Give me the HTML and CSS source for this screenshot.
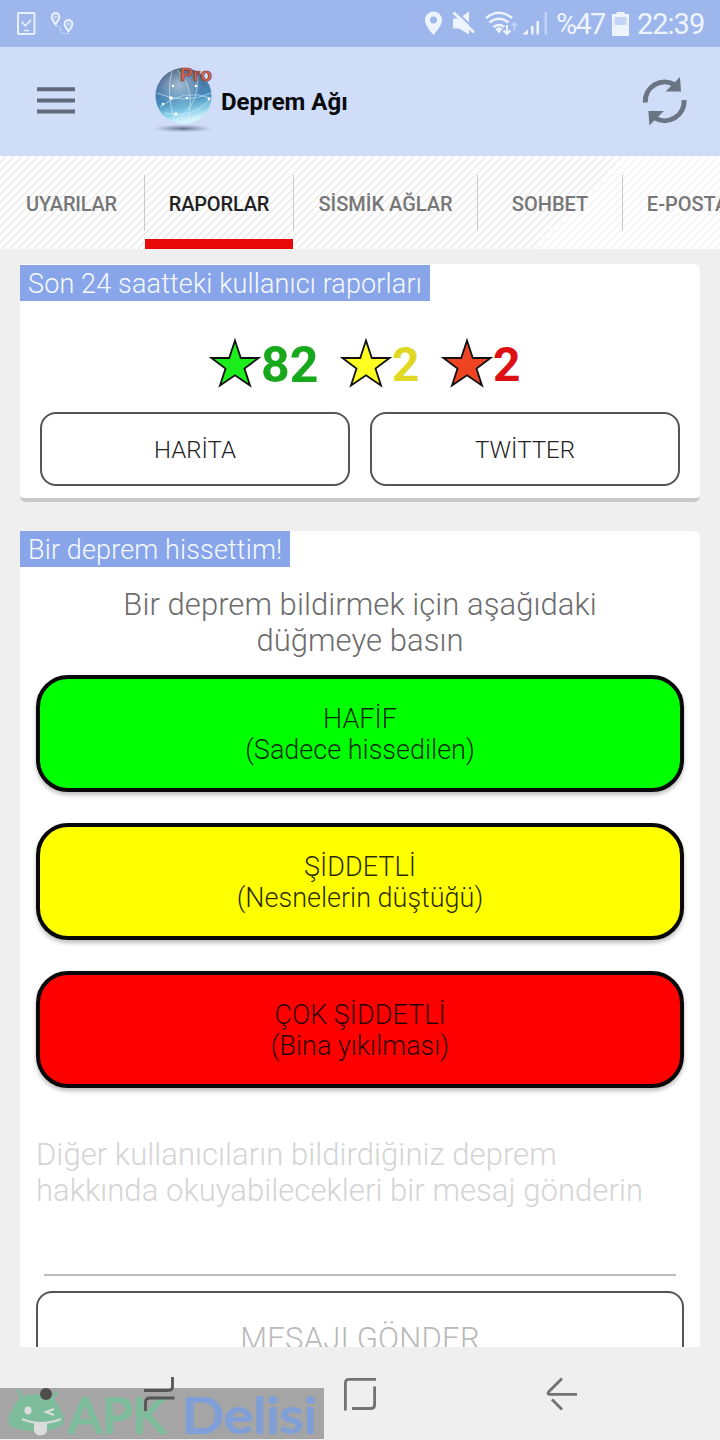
FILE: index.html
```html
<!DOCTYPE html>
<html lang="tr">
<head>
<meta charset="utf-8">
<title>Deprem Ağı</title>
<link rel="stylesheet" href="styles.css">
</head>
<body>
<div class="phone">
  <div class="status">
    <svg class="status-left" width="62" height="26" viewBox="0 0 62 26" fill="none" stroke="#e6effc">
      <rect x="3" y="2" width="16.500" height="21" rx="1" stroke-width="2"/>
      <path d="M6.500 10.500l3.700 4.300 6-6M9 19.500h5" stroke-width="1.700"/>
      <path d="M40.500 13c-2.300-3-3.800-4.500-3.800-7a3.800 3.800 0 0 1 7.600 0c0 2.500-1.500 4-3.800 7zM53.500 20c-2.300-3-3.800-4.500-3.800-7a3.800 3.800 0 0 1 7.600 0c0 2.500-1.500 4-3.800 7z" stroke-width="2.200"/>
      <circle cx="40.500" cy="6" r="1"/><circle cx="53.500" cy="13" r="1"/>
      <path d="M40.500 15q5 0 5 4t8 3.500v-3" stroke-dasharray="2 1"/>
    </svg>
    <div class="status-right">
      <svg width="124" height="28" viewBox="0 0 124 28" fill="#edf4fd">
        <path fill-rule="evenodd" d="M9.500 1.500a8.500 8.500 0 0 1 8.500 8.500c0 6-8.500 15-8.500 15S1 16 1 10a8.500 8.500 0 0 1 8.500-8.500zm0 5a3.500 3.500 0 1 0 0 7 3.500 3.500 0 0 0 0-7z"/>
        <path d="M29 8.500h6l10-7v23L35 18.500h-6z"/>
        <path d="M31 .500l20 19" stroke="#9db6ec" stroke-width="2"/>
        <path d="M29.500 2.500l20.500 20" stroke="#edf4fd" stroke-width="2.800"/>
        <g fill="none" stroke="#edf4fd" stroke-width="2.600"><path d="M62 8q13-10.500 26 0"/><path d="M65.500 12.500q9.500-7.500 19 0"/><path d="M69.500 17q5.500-4 11 0"/></g>
        <path d="M71.500 19q4-3.500 7 0L75 23.500z"/>
        <path d="M83 15v9m-3.500-3.500l3.500 3.500 3.500-3.500" stroke="#edf4fd" fill="none" stroke-width="2"/>
        <path d="M90.500 21v-8m-3 3l3-3 3 3" stroke="#c3d5f6" fill="none" stroke-width="1.600"/>
        <path d="M98 24.500h6v-5zM107 16h2.500v8.500H107zM112.500 11h2.500v13.500h-2.500z"/>
        <path fill="#c0d2f6" d="M120.500 2h2.500v22.500h-2.500z"/>
      </svg>
      <span class="pct">%47</span>
      <svg width="17" height="24" viewBox="0 0 17 24"><path fill="#edf4fd" d="M4.500 0h8v2H17v22H0V2h4.500z"/><path fill="#c4d4f5" d="M2.500 5h12v8h-12z"/></svg>
      <span class="clock">22:39</span>
    </div>
  </div>
  <header class="bar">
    <svg class="menu" width="38" height="27" viewBox="0 0 38 27"><path d="M0 2.200h38M0 13.500h38M0 24.500h38" stroke="#62697b" stroke-width="4"/></svg>
    <svg class="logo" width="64" height="70" viewBox="0 0 64 70">
      <defs>
        <linearGradient id="globe" x1="0" y1="0" x2="0.200" y2="1"><stop offset="0" stop-color="#2c3f58"/><stop offset=".3" stop-color="#4a709b"/><stop offset=".62" stop-color="#458abb"/><stop offset=".85" stop-color="#86cee8"/><stop offset="1" stop-color="#d5f3fb"/></linearGradient>
        <radialGradient id="shine" cx=".42" cy=".3" r=".42"><stop offset="0" stop-color="#fff" stop-opacity=".5"/><stop offset="1" stop-color="#fff" stop-opacity="0"/></radialGradient>
        <radialGradient id="shade"><stop offset="0" stop-color="#48546c" stop-opacity=".8"/><stop offset="1" stop-color="#7584a5" stop-opacity="0"/></radialGradient>
      </defs>
      <ellipse cx="30" cy="63.500" rx="30" ry="4" fill="url(#shade)"/>
      <circle cx="30.500" cy="31" r="28" fill="url(#globe)"/>
      <circle cx="30.500" cy="31" r="28" fill="url(#shine)"/>
      <g fill="none" stroke="#d9effb" stroke-width=".9" opacity=".65"><path d="M4 28q27 12 54 0M7 42q24-19 50-9M19 6q-6 20 2 48M24 5q20 20 10 52M44 11q3 28-20 43M12 48q25 7 44-12"/></g>
      <g fill="#fff"><circle cx="18" cy="33" r="1.800"/><circle cx="34" cy="33" r="1.300"/><circle cx="56" cy="34" r="1.400"/><circle cx="10" cy="39" r="1.300"/><circle cx="23" cy="49" r="1.700"/><circle cx="20" cy="21" r="1.200"/><circle cx="43" cy="21" r="1.300"/></g>
      <text x="27" y="16" class="pro" textLength="32" lengthAdjust="spacingAndGlyphs">Pro</text>
    </svg>
    <h1 class="title">Deprem Ağı</h1>
    <svg class="refresh" width="46" height="50" viewBox="0 0 46 50"><g fill="none" stroke="#6b7482" stroke-width="5"><path d="M4.300 25.500A19.400 19.400 0 0 1 34 7.900"/><path d="M43.100 23.100A19.400 19.400 0 0 1 13.400 40.700"/></g><path fill="#6b7482" d="M39 0l1 14.500H24.500zM8.400 48.600L7.400 34.100h15.500z"/></svg>
  </header>
  <nav class="tabs">
    <div class="tab t1"><span>UYARILAR</span></div>
    <div class="tab t2 active"><span>RAPORLAR</span></div>
    <div class="tab t3"><span>SİSMİK AĞLAR</span></div>
    <div class="tab t4"><span>SOHBET</span></div>
    <div class="tab t5"><span>E-POSTA</span></div>
  </nav>
  <main class="content">
    <section class="card">
      <h2 class="label l1">Son 24 saatteki kullanıcı raporları</h2>
      <div class="counts">
        <svg class="star" width="52" height="50" viewBox="0 0 52 50"><path d="M26 2.500l5.800 17.500H49.500L35.500 30.500l5.500 17L26 37.300 11 47.500l5.500-17L2.500 20h17.700z" fill="#1cee1c" stroke="#111" stroke-width="1.800"/></svg><b class="n green">82</b>
        <svg class="star s2" width="52" height="50" viewBox="0 0 52 50"><path d="M26 2.500l5.800 17.500H49.500L35.500 30.500l5.500 17L26 37.300 11 47.500l5.500-17L2.500 20h17.700z" fill="#ff2" stroke="#111" stroke-width="1.800"/></svg><b class="n yellow">2</b>
        <svg class="star s3" width="52" height="50" viewBox="0 0 52 50"><path d="M26 2.500l5.800 17.500H49.500L35.500 30.500l5.500 17L26 37.300 11 47.500l5.500-17L2.500 20h17.700z" fill="#ef4423" stroke="#111" stroke-width="1.800"/></svg><b class="n red">2</b>
      </div>
      <div class="pair"><button class="outline">HARİTA</button><button class="outline">TWİTTER</button></div>
    </section>
    <section class="card report">
      <h2 class="label l2">Bir deprem hissettim!</h2>
      <p class="lead">Bir deprem bildirmek için aşağıdaki<br>düğmeye basın</p>
      <button class="big mild">HAFİF<br>(Sadece hissedilen)</button>
      <button class="big strong">ŞİDDETLİ<br>(Nesnelerin düştüğü)</button>
      <button class="big severe">ÇOK ŞİDDETLİ<br>(Bina yıkılması)</button>
      <div class="field">Diğer kullanıcıların bildirdiğiniz deprem<br>hakkında okuyabilecekleri bir mesaj gönderin</div>
      <div class="rule"></div>
      <button class="send">MESAJI GÖNDER</button>
    </section>
  </main>
  <footer class="sysnav">
    <div class="watermark">
      <svg width="324" height="51" viewBox="0 0 324 51">
        <g fill="#7dbd9c"><path d="M17 13L22 9Q36 3 51 9L56 13Q61 22 64 31Q64 40 49 42L36 44L19 41Q7 39 8 31Q11 22 17 13z"/><path d="M19 3l5 10M57 4l-6 9" stroke="#7dbd9c" stroke-width="3" stroke-linecap="round"/></g>
        <ellipse cx="28" cy="22.500" rx="3.500" ry="4" fill="#dcdcdc"/>
        <path d="M54 21l-8 3 8 3M22 31q19 8 39 0" fill="none" stroke="#dcdcdc" stroke-width="2"/>
        <path d="M34 34.500h13v6q0 7-6.500 7T34 40.500z" fill="#dcdcdc"/>
        <text class="wm green-mark" x="68" y="45" textLength="98" lengthAdjust="spacingAndGlyphs">APK</text>
        <text class="wm blue-mark" x="182" y="45" textLength="135" lengthAdjust="spacingAndGlyphs">Delisi</text>
      </svg>
    </div>
    <svg class="dot" width="12" height="12" viewBox="0 0 12 12"><circle cx="6" cy="6" r="6" fill="#4d4d4d"/></svg>
    <svg class="recent" width="32" height="36" viewBox="0 0 32 36" fill="none" stroke="#555" stroke-width="2.800"><path d="M0 13.500h24q4.500 0 4.500-4V0M30.500 21H6q-4.500 0-4.500 4v9"/></svg>
    <svg class="home" width="32" height="33" viewBox="0 0 32 33" fill="none" stroke="#737373" stroke-width="2.800"><path d="M1.400 32.500V5q0-3.600 3.600-3.600h27M30.600 8.500V27q0 3.500-3.600 3.500H8"/></svg>
    <svg class="back" width="32" height="34" viewBox="0 0 32 34" fill="none" stroke="#737373" stroke-width="2.800"><path d="M16 1.500L2.500 15q-1.500 2.300 1 2.300H31M6 22.500l10 10"/></svg>
  </footer>
</div>
</body>
</html>
```
FILE: styles.css
```css
* { box-sizing: border-box; }
body { margin: 0; font-family: Roboto, "Liberation Sans", sans-serif; }
.phone { width: 720px; height: 1440px; display: flex; flex-direction: column; background: #efefef; overflow: hidden; }
h1, h2, p { margin: 0; }
button { font-family: inherit; padding: 0; display: block; }
svg { display: block; flex: none; }

.status { height: 47px; flex: none; background: #9db6ec; display: flex; justify-content: space-between; align-items: flex-start; padding: 11px 16px 0 15px; }
.status-right { display: flex; align-items: center; color: #edf4fd; font-size: 29px; height: 26px; line-height: 26px; }
.pct { width: 47px; margin: 0 9px 0 8px; letter-spacing: -1.800px; }
.clock { width: 67px; margin-left: 8px; letter-spacing: -1px; }

.bar { height: 109px; flex: none; background: #cfddf8; display: flex; align-items: flex-start; padding: 0 33px 0 37px; }
.menu { margin-top: 40px; }
.logo { margin: 18px 0 0 78px; }
.pro { font: bold 18px "Liberation Sans", sans-serif; fill: #d96a55; stroke: #752c25; stroke-width: .6px; }
.title { margin: 40px auto 0 4px; font-size: 24px; font-weight: 700; line-height: 30px; color: #090a0e; white-space: nowrap; }
.refresh { margin-top: 30px; }

.tabs { height: 93px; flex: none; display: flex; overflow: hidden; background: repeating-linear-gradient(135deg, #fefefe 0 4px, #ebebeb 4px 5px, #fefefe 5px 5.660px); }
.tab { flex: none; display: flex; flex-direction: column; align-items: center; justify-content: center; font-size: 20px; font-weight: 500; color: #777; white-space: nowrap; padding: 2px 1px 0 0; background: linear-gradient(#c9c9c9, #c9c9c9) right 19px / 1px 56px no-repeat; }
.t1 { width: 145px; letter-spacing: -.2px; padding-right: 2px; }
.t2 { width: 149px; letter-spacing: -.15px; }
.t3 { width: 184px; }
.t4 { width: 145px; }
.t5 { width: 129px; padding-right: 0; }
.active { color: #222; background: linear-gradient(#c9c9c9, #c9c9c9) right 19px / 1px 56px no-repeat, linear-gradient(#e90909, #e90909) 0 100% / 148px 10px no-repeat; }

.content { height: 1098px; flex: none; overflow: hidden; padding: 15px 20px 0; }
.card { height: 238px; background: #fff; border-radius: 0 6px 6px 6px; border-bottom: 4px solid #c8c8c8; display: flex; flex-direction: column; margin-bottom: 29px; }
.report { height: 900px; padding: 0 16px; }
.label { align-self: flex-start; height: 36px; flex: none; margin-top: 1px; line-height: 38px; padding-left: 8px; background: #88a5e9; color: #f6faff; font-size: 27px; letter-spacing: .14px; font-weight: 300; white-space: nowrap; }
.l1 { width: 410px; }
.l2 { width: 270px; margin-left: -16px; margin-top: 0; }
.counts { height: 50px; margin: 37px 0 24px 189px; display: flex; align-items: center; }
.n { font: 700 48px/52px Roboto, sans-serif; padding-top: 3px; }
.green { color: #18a81c; width: 57px; font-size: 50px; }
.yellow { color: #e0d823; width: 27px; }
.red { color: #dd1014; width: 27px; }
.s2 { margin-left: 22px; }
.s3 { margin-left: 22px; }
.pair { display: flex; gap: 20px; padding: 0 20px; }
.outline { width: 310px; height: 74px; border: 2px solid #555; border-radius: 16px; background: #fff; font-size: 24px; font-weight: 300; color: #222; padding-top: 1px; }
.lead { text-align: center; margin-top: 20px; font-size: 31px; letter-spacing: .06px; line-height: 36px; font-weight: 300; color: #6c6c6c; height: 88px; }
.big { width: 648px; height: 117px; flex: none; margin-bottom: 31px; border: 4px solid #080808; border-radius: 32px; box-shadow: 0 3px 4px rgba(0, 0, 0, .26); font-size: 27px; line-height: 31px; font-weight: 300; color: rgba(0, 0, 0, .85); padding-top: 2px; }
.mild { background: #0f0; }
.strong { background: #ff0; }
.severe { background: #f00; }
.field { margin-top: 18px; height: 137px; flex: none; font-size: 31px; letter-spacing: .06px; line-height: 36px; font-weight: 300; color: #d4d4d4; white-space: nowrap; }
.rule { height: 2px; flex: none; margin: 0 8px 15px; background: #bbb; }
.send { width: 648px; height: 92px; flex: none; border: 2px solid #555; border-radius: 16px; background: #fff; font-size: 31px; letter-spacing: .2px; font-weight: 300; color: #b9b9b9; padding-top: 3px; }

.sysnav { height: 93px; flex: none; position: relative; display: flex; align-items: flex-start; padding-left: 40px; }
.watermark { position: absolute; left: 0; bottom: 1px; width: 324px; height: 51px; background: #a5a5a5; }
.wm { font-family: Lato, sans-serif; font-size: 49px; font-weight: 400; stroke-linejoin: round; stroke-width: 2px; }
.green-mark { fill: #7dbd9c; stroke: #7dbd9c; }
.blue-mark { fill: #809fd7; stroke: #809fd7; }
.dot, .recent { position: relative; }
.dot { margin-top: 41px; }
.recent { margin: 30px 0 0 92px; }
.home { margin: 31px 0 0 168px; }
.back { margin: 30px 0 0 170px; }
```
